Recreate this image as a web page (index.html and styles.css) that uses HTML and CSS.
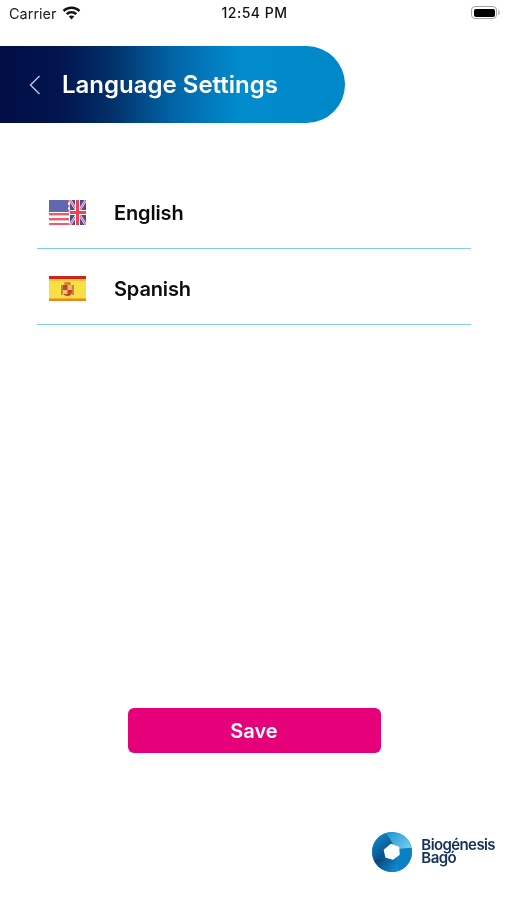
FILE: index.html
```html
<!DOCTYPE html>
<html lang="en">
<head>
<meta charset="utf-8">
<title>Language Settings</title>
<link rel="stylesheet" href="styles.css">
</head>
<body>
<div class="page">
  <div class="status">
    <div class="status-left">
      <span class="carrier">Carrier</span>
      <svg class="wifi" width="19" height="14" viewBox="0 0 19 14"><path d="M9.500 0.500C6 0.500 3 1.800 0.700 4l1.700 1.900C4.200 4.100 6.700 3 9.500 3s5.300 1.100 7.100 2.900L18.300 4C16 1.800 13 .5 9.500.5z"/><path d="M9.500 5C7.300 5 5.400 5.800 3.900 7.300l1.700 1.800C6.600 8.100 8 7.500 9.500 7.500s2.900.6 3.900 1.600l1.700-1.800C13.600 5.800 11.700 5 9.500 5z"/><path d="M9.500 9.500c-1.100 0-2 .4-2.700 1.100l2.700 2.900 2.700-2.900c-.7-.7-1.600-1.100-2.700-1.100z"/></svg>
    </div>
    <span class="time">12:54 PM</span>
    <div class="battery">
      <div class="battery-body"><span class="battery-fill"></span></div>
      <span class="battery-nub"></span>
    </div>
  </div>

  <header class="title-bar">
    <svg class="back" width="12" height="20" viewBox="0 0 12 20"><path d="M10.500 1 1.500 10l9 9" fill="none" stroke="#b9cfe0" stroke-width="1.400"/></svg>
    <h1 class="title">Language Settings</h1>
  </header>

  <ul class="languages">
    <li class="language">
      <svg class="flag" width="37" height="25" viewBox="0 0 37 25">
        <rect width="37" height="25" fill="#fff"/>
        <g fill="#ef5a6c">
          <rect x="0" y="13" width="20" height="2.400"/>
          <rect x="0" y="18" width="20" height="2.400"/>
          <rect x="0" y="23" width="20" height="2"/>
          <rect x="19" y="0" width="1.500" height="2.400"/>
          <rect x="19" y="5" width="1.500" height="2.400"/>
          <rect x="19" y="9.500" width="1.500" height="2.400"/>
        </g>
        <rect width="19" height="12" fill="#6068b4"/>
        <rect x="21" width="16" height="25" fill="#3f4fa3"/>
        <path d="M21 0 37 25M37 0 21 25" stroke="#f4c9cf" stroke-width="2.600"/>
        <path d="M21 0 37 25M37 0 21 25" stroke="#ef5a6c" stroke-width="1"/>
        <path d="M26 0h5v10h6v5h-6v10h-5V15h-5v-5h5z" fill="#fff"/>
        <path d="M27 0h3v11h7v3h-7v11h-3V14h-6v-3h6z" fill="#ee4258"/>
      </svg>
      <span class="language-name">English</span>
    </li>
    <li class="language">
      <svg class="flag" width="37" height="25" viewBox="0 0 37 25">
        <rect width="37" height="25" fill="#f7df45"/>
        <rect width="37" height="3" fill="#c9261c"/>
        <rect width="37" height="2" y="3" fill="#f3a62c" opacity=".5"/>
        <rect width="37" height="2.500" y="22.500" fill="#e58a1f"/>
        <path d="M14 9h9v7c0 2.500-2 4-4.500 4S14 18.500 14 16z" fill="#c9402d"/>
        <rect x="15" y="6" width="7" height="3" rx="1.500" fill="#c78a2c"/>
        <rect x="18.500" y="9" width="4.500" height="5" fill="#eeb95b"/>
        <rect x="14" y="14" width="4.500" height="4" fill="#ecc46a"/>
        <rect x="12" y="9" width="2" height="10" fill="#b9894a"/>
        <rect x="23" y="9" width="2" height="10" fill="#b9894a"/>
      </svg>
      <span class="language-name">Spanish</span>
    </li>
  </ul>

  <div class="actions">
    <button class="save" type="button">Save</button>
  </div>

  <footer class="brand">
    <svg class="brand-mark" width="40" height="40" viewBox="0 0 40 40">
      <defs>
        <linearGradient id="seg-top" x1="0" y1="0" x2="1" y2="0.600">
          <stop offset="0" stop-color="#1e93d2"/>
          <stop offset="1" stop-color="#6cc6ea"/>
        </linearGradient>
        <linearGradient id="seg-left" x1="0.200" y1="0" x2="0.800" y2="1">
          <stop offset="0" stop-color="#0f8ccd"/>
          <stop offset="1" stop-color="#0a3f78"/>
        </linearGradient>
        <linearGradient id="seg-bottom" x1="0" y1="0.300" x2="1" y2="0.800">
          <stop offset="0" stop-color="#0a3b74"/>
          <stop offset="1" stop-color="#0f93d4"/>
        </linearGradient>
      </defs>
      <circle cx="20" cy="20" r="20" fill="#0c8ccd"/>
      <path d="M14 1A20 20 0 0 1 39.500 16L26 17L21 12Z" fill="url(#seg-top)"/>
      <path d="M39.500 16A20 20 0 0 1 27 38.700L24 25L26 17Z" fill="#0b80c2"/>
      <path d="M27 38.700A20 20 0 0 1 1.800 28L15 24.500L24 25Z" fill="url(#seg-bottom)"/>
      <path d="M1.800 28A20 20 0 0 1 14 1L21 12L15 24.500Z" fill="url(#seg-left)"/>
      <path d="M19 12.500 26.500 15.500 27 22.500 21 27 14 25 12.500 18Z" fill="#fff" stroke="#fff" stroke-width="1.500" stroke-linejoin="round"/>
    </svg>
    <div class="brand-name"><span>Biogénesis</span><span>Bagó</span></div>
  </footer>
</div>
</body>
</html>
```

FILE: styles.css
```css
* {
  box-sizing: border-box;
}

html,
body {
  margin: 0;
  padding: 0;
  background: #fff;
}

.page {
  width: 507px;
  height: 900px;
  display: flex;
  flex-direction: column;
  font-family: Inter, "Liberation Sans", sans-serif;
  color: #000;
  overflow: hidden;
  filter: blur(0.35px);
}

.status {
  height: 46px;
  padding: 3px 7px 0 9px;
  display: grid;
  grid-template-columns: 1fr auto 1fr;
  align-items: start;
}

.status-left {
  display: flex;
  align-items: center;
  gap: 5px;
  height: 20px;
}

.carrier {
  font-size: 14.500px;
  color: #222;
}

.wifi {
  fill: #111;
}

.time {
  font-size: 14px;
  font-weight: 500;
  line-height: 20px;
  letter-spacing: 0.5px;
  color: #111;
}

.battery {
  justify-self: end;
  margin-top: 3px;
  display: flex;
  align-items: center;
  gap: 1px;
}

.battery-body {
  width: 26px;
  height: 13px;
  padding: 1.500px;
  border: 1.500px solid #a3a3a3;
  border-radius: 4px;
  display: flex;
}

.battery-fill {
  width: 100%;
  background: #000;
  border-radius: 2px;
}

.battery-nub {
  width: 2px;
  height: 5px;
  background: #c4c4c4;
  border-radius: 0 2px 2px 0;
}

.title-bar {
  width: 345px;
  height: 77px;
  padding-left: 29px;
  display: flex;
  align-items: center;
  gap: 21px;
  border-radius: 0 39px 39px 0;
  background: linear-gradient(90deg, #020d45 0, #02154f 60px, #022f68 110px, #0266a8 175px, #028ccd 240px, #0188c9 345px);
  flex: none;
}

.title {
  margin: 0;
  color: #fff;
  font-size: 24px;
  font-weight: 600;
}

.languages {
  list-style: none;
  margin: 50px 36px 0 37px;
  padding: 0;
}

.language {
  height: 76px;
  padding: 4px 0 0 12px;
  display: flex;
  align-items: center;
  gap: 28px;
  border-bottom: 1px solid #7fcfe6;
}

.flag {
  flex: none;
}

.language-name {
  font-size: 20px;
  font-weight: 600;
  letter-spacing: -0.15px;
  color: #0b0b0b;
}

.actions {
  margin-top: 383px;
  padding-left: 1px;
  display: flex;
  justify-content: center;
}

.save {
  width: 253px;
  height: 45px;
  border: 0;
  border-radius: 6px;
  background: #e6007a;
  color: #fff;
  font-family: inherit;
  font-size: 20px;
  font-weight: 600;
}

.brand {
  margin-top: 79px;
  padding-right: 12px;
  display: flex;
  justify-content: flex-end;
  align-items: center;
  gap: 9px;
}

.brand-mark {
  flex: none;
}

.brand-name {
  display: flex;
  flex-direction: column;
  margin-top: -2px;
  font-size: 15px;
  font-weight: 600;
  line-height: 13px;
  letter-spacing: -0.6px;
  color: #13305f;
}
```
